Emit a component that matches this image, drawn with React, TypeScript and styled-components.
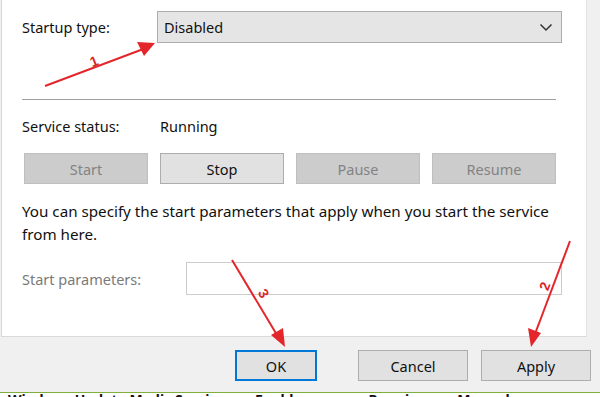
import React from 'react';
import styled, { createGlobalStyle } from 'styled-components';

const GlobalStyle = createGlobalStyle`
  html, body {
    margin: 0;
    padding: 0;
    background: #f0f0f0;
  }
  body {
    font-family: 'Noto Sans', 'Open Sans', sans-serif;
  }
`;

const Screen = styled.div`
  position: relative;
  width: 600px;
  height: 397px;
  overflow: hidden;
  background: #f0f0f0;
  display: flex;
  flex-direction: column;
  font-size: 14.5px;
  color: #111;
`;

const Top = styled.div`
  display: flex;
  flex: none;
  height: 337px;
`;

const Panel = styled.div`
  width: 586px;
  margin-left: 1px;
  background: #fff;
  border-left: 1px solid #d6d6d6;
  border-bottom: 1px solid #d9d9d9;
  border-right: 1px solid #e3e3e3;
  box-sizing: border-box;
  padding: 11px 0 0 20px;
  display: flex;
  flex-direction: column;
`;

const Row = styled.div<{ $top?: number; $height?: number }>`
  display: flex;
  align-items: center;
  margin-top: ${(p) => p.$top ?? 0}px;
  height: ${(p) => p.$height ?? 32}px;
`;

const Label = styled.span<{ $width: number; $muted?: boolean }>`
  width: ${(p) => p.$width}px;
  flex: none;
  color: ${(p) => (p.$muted ? '#7a7a7a' : '#111')};
`;

const Combo = styled.div`
  width: 405px;
  height: 32px;
  box-sizing: border-box;
  background: #e5e5e5;
  border: 1px solid #adadad;
  display: flex;
  align-items: center;
  justify-content: space-between;
  padding: 0 8px 0 6px;
`;

const Separator = styled.div`
  margin-top: 56px;
  width: 534px;
  height: 1px;
  background: #a0a0a0;
`;

const ButtonRow = styled.div`
  display: flex;
  gap: 12px;
  margin: 16px 0 0 2px;
`;

const ServiceButton = styled.div<{ $disabled?: boolean }>`
  width: 124px;
  height: 31px;
  box-sizing: border-box;
  display: flex;
  align-items: center;
  justify-content: center;
  background: ${(p) => (p.$disabled ? '#cccccc' : '#e1e1e1')};
  border: 1px solid ${(p) => (p.$disabled ? '#bfbfbf' : '#adadad')};
  color: ${(p) => (p.$disabled ? '#838383' : '#111')};
`;

const Paragraph = styled.p`
  margin: 16px 0 0;
  font-size: 15.2px;
  line-height: 23px;
  width: 528px;
`;

const ParamInput = styled.div`
  width: 376px;
  height: 33px;
  box-sizing: border-box;
  border: 1px solid #cccccc;
  background: #fff;
`;

const SideStrip = styled.div`
  flex: 1;
  background: #f0f0f0;
`;

const Footer = styled.div`
  flex: none;
  height: 55px;
  display: flex;
  align-items: flex-start;
  padding: 13px 0 0 235px;
  box-sizing: border-box;
`;

const DialogButton = styled.div<{ $width: number; $gap?: number; $default?: boolean }>`
  width: ${(p) => p.$width}px;
  height: 31px;
  margin-left: ${(p) => p.$gap ?? 0}px;
  box-sizing: border-box;
  display: flex;
  align-items: center;
  justify-content: center;
  background: #e1e1e1;
  border: ${(p) => (p.$default ? '2px solid #0078d7' : '1px solid #adadad')};
  color: #111;
`;

const BelowWindow = styled.div`
  flex: none;
  height: 5px;
  background: #fff;
  border-top: 1px solid #7fb13a;
  overflow: hidden;
`;

const BelowText = styled.div`
  display: flex;
  gap: 30px;
  padding-left: 8px;
  font-family: 'Noto Sans', sans-serif;
  font-size: 14px;
  font-weight: bold;
  line-height: 14px;
  white-space: nowrap;
  color: #111;
`;

const Overlay = styled.svg`
  position: absolute;
  left: 0;
  top: 0;
  pointer-events: none;
`;

const Mark = styled.text`
  font-family: 'Liberation Sans', sans-serif;
  font-size: 14px;
  font-weight: bold;
  fill: #d8262b;
`;

function Chevron() {
  return (
    <svg width="14" height="9" viewBox="0 0 14 9">
      <path d="M1.5 1.5 L7 7 L12.5 1.5" fill="none" stroke="#333" strokeWidth="1.5" />
    </svg>
  );
}

function Annotations() {
  const red = '#e3262b';
  return (
    <Overlay width="600" height="397" viewBox="0 0 600 397">
      <line x1="45" y1="86" x2="146" y2="48" stroke={red} strokeWidth="2" />
      <polygon points="155,43 137,42 144,56" fill={red} />
      <Mark x="90" y="66" transform="rotate(-22 94 61)">1</Mark>

      <line x1="570" y1="241" x2="535" y2="334" stroke={red} strokeWidth="2" />
      <polygon points="531,347 528,328 541,333" fill={red} />
      <Mark x="540" y="290" transform="rotate(-70 545 285)">2</Mark>

      <line x1="232" y1="260" x2="277" y2="335" stroke={red} strokeWidth="2" />
      <polygon points="285,347 271,335 283,328" fill={red} />
      <Mark x="259" y="298" transform="rotate(60 263 294)">3</Mark>
    </Overlay>
  );
}

export default function App() {
  return (
    <>
      <GlobalStyle />
      <Screen>
        <Top>
          <Panel>
            <Row>
              <Label $width={135}>Startup type:</Label>
              <Combo>
                <span>Disabled</span>
                <Chevron />
              </Combo>
            </Row>
            <Separator />
            <Row $top={15} $height={22}>
              <Label $width={138}>Service status:</Label>
              <span>Running</span>
            </Row>
            <ButtonRow>
              <ServiceButton $disabled>Start</ServiceButton>
              <ServiceButton>Stop</ServiceButton>
              <ServiceButton $disabled>Pause</ServiceButton>
              <ServiceButton $disabled>Resume</ServiceButton>
            </ButtonRow>
            <Paragraph>
              You can specify the start parameters that apply when you start the service from here.
            </Paragraph>
            <Row $top={16} $height={33}>
              <Label $width={164} $muted>
                Start parameters:
              </Label>
              <ParamInput />
            </Row>
          </Panel>
          <SideStrip />
        </Top>
        <Footer>
          <DialogButton $width={82} $default>
            OK
          </DialogButton>
          <DialogButton $width={110} $gap={41}>
            Cancel
          </DialogButton>
          <DialogButton $width={110} $gap={13}>
            Apply
          </DialogButton>
        </Footer>
        <BelowWindow>
          <BelowText>
            <span>Windows Update Medic Service</span>
            <span>Enables re...</span>
            <span>Running</span>
            <span>Manual</span>
          </BelowText>
        </BelowWindow>
        <Annotations />
      </Screen>
    </>
  );
}
